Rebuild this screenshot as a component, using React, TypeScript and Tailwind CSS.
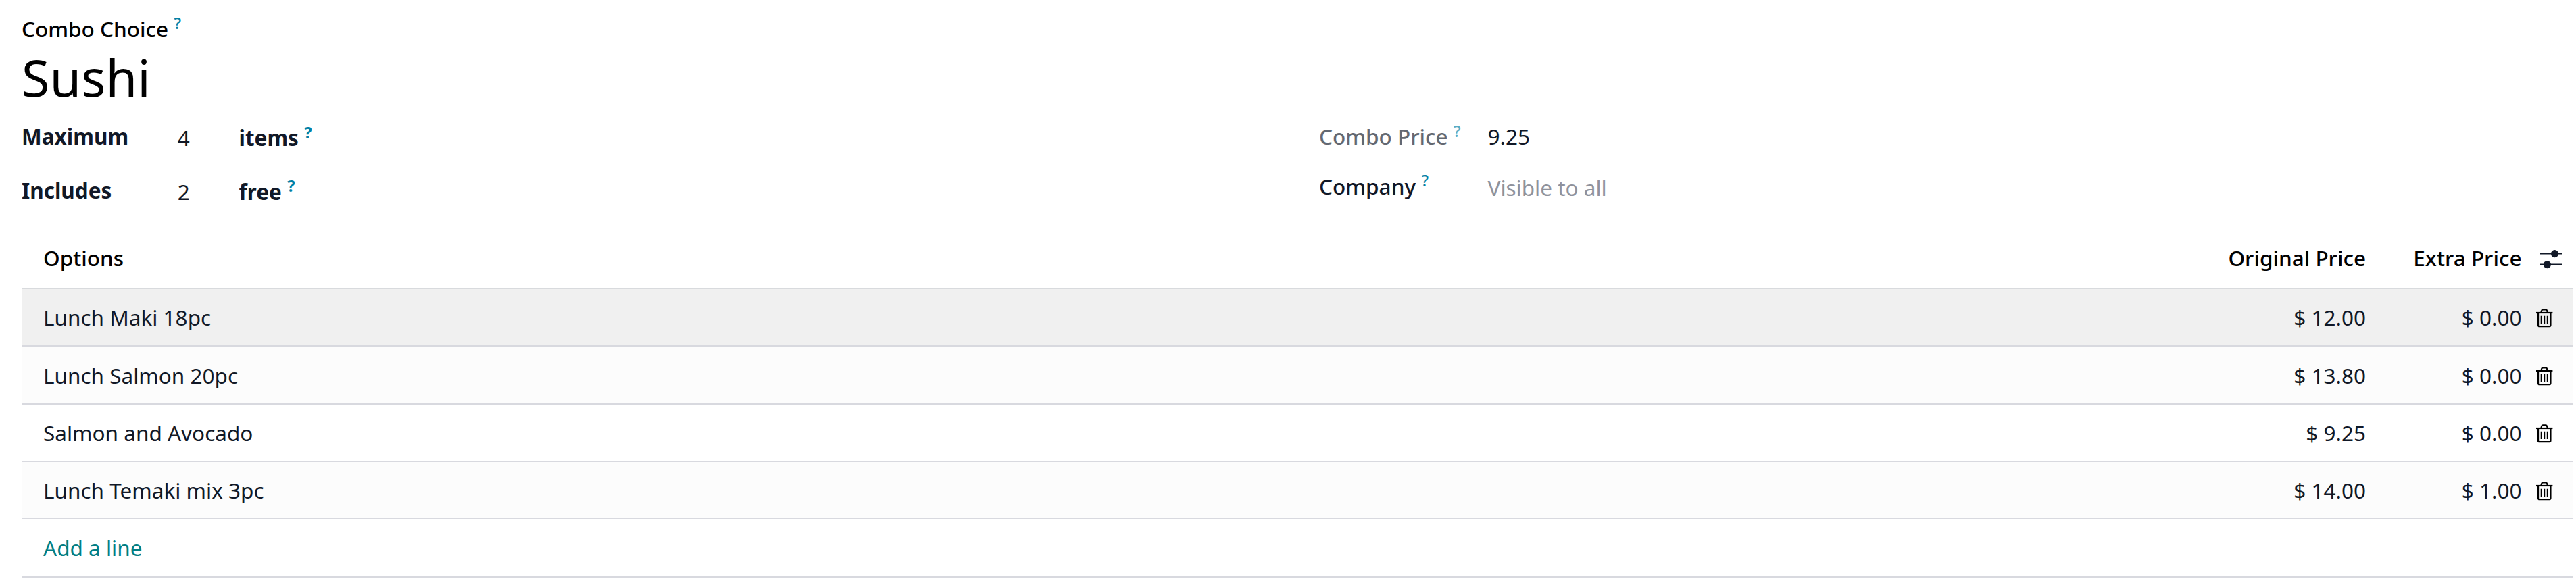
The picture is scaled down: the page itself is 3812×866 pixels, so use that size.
function Help({ className = "-mt-0.5" }: { className?: string }) {
  return <sup className={`top-0 ml-[8.4px] text-[23.6px] leading-[32px] text-[#0180a5] ${className}`}>?</sup>;
}

function TrashIcon() {
  return (
    <svg className="block h-7 w-6 overflow-visible" viewBox="0 0 24 28" fill="none" stroke="#000">
      <path d="M0 6H24.4" strokeWidth="2.2" />
      <path d="M7.2 6L8.2 2.7Q8.6 1.3 10 1.3H14.2Q15.6 1.3 16 2.7L17 6" strokeWidth="2.2" />
      <path d="M3 6V24.2Q3 26.2 5 26.2H19.4Q21.4 26.2 21.4 24.2V6" strokeWidth="2.3" />
      <path d="M7.7 10.7V22M12.2 10.7V22M16.8 10.7V22" strokeWidth="2" />
    </svg>
  );
}

function SlidersIcon() {
  return (
    <svg className="block h-7 w-8" viewBox="0 0 32 28" fill="#111827">
      <path d="M0 4.5h32v2h-32zM0 20.5h32v2h-32z" />
      <circle cx="21.5" cy="5.6" r="5.6" />
      <circle cx="10.4" cy="21.6" r="5.6" />
    </svg>
  );
}

const rows = [
  { name: "Lunch Maki 18pc", price: "$ 12.00", extra: "$ 0.00", row: "h-[85px] pt-5 bg-[#f0f0f0]" },
  { name: "Lunch Salmon 20pc", price: "$ 13.80", extra: "$ 0.00", row: "h-[86px] pt-[21px] bg-[#fcfcfc]" },
  { name: "Salmon and Avocado", price: "$ 9.25", extra: "$ 0.00", row: "h-[85px] pt-5 bg-white" },
  { name: "Lunch Temaki mix 3pc", price: "$ 14.00", extra: "$ 1.00", row: "h-[85px] pt-5 bg-[#fcfcfc]" },
];

export default function App() {
  return (
    <div className="h-[866px] w-[3812px] overflow-hidden bg-white pl-8 pr-1 pt-[21px] font-['Noto_Sans',sans-serif] text-[31.5px] leading-[43px] text-[#111827]">
      <div className="flex h-[41px] items-start font-medium text-black">
        Combo Choice
        <Help className="-mt-[3px]" />
      </div>
      <h1 className="text-[75.6px] leading-[103px] text-black">Sushi</h1>

      <div className="flex h-[197px] pt-[15px]">
        <div className="w-[1920px] font-bold">
          <div className="flex h-20 items-start">
            <span className="w-[230.75px]">Maximum</span>
            <span className="w-[90.75px] pt-0.5 font-normal">4</span>
            <span className="flex items-start pt-0.5">items<Help /></span>
          </div>
          <div className="flex h-20 items-start">
            <span className="w-[230.75px]">Includes</span>
            <span className="w-[90.75px] pt-0.5 font-normal">2</span>
            <span className="flex items-start pt-0.5">free<Help className="-mt-[3px]" /></span>
          </div>
        </div>
        <div>
          <div className="flex h-[74px] items-start">
            <span className="flex w-[249.5px] items-start font-medium opacity-65">Combo Price<Help /></span>
            <span>9.25</span>
          </div>
          <div className="flex items-start">
            <span className="flex w-[249.5px] items-start font-medium">Company<Help className="-mt-[3px]" /></span>
            <span className="pt-0.5 text-[#8f929c]">Visible to all</span>
          </div>
        </div>
      </div>

      <div className="flex h-[66px] items-start border-b border-[#d8dadd] pl-8 font-medium text-black">
        <span className="-mt-0.5 w-[3137px]">Options</span>
        <span className="-mt-0.5 w-[300px] text-right">Original Price</span>
        <span className="-mt-0.5 w-[230.5px] text-right">Extra Price</span>
        <span className="ml-[27.5px] pt-[8.25px]"><SlidersIcon /></span>
      </div>
      {rows.map((r) => (
        <div key={r.name} className={`flex items-start border-b-2 border-[#d8d9df] pl-8 ${r.row}`}>
          <span className="w-[3137px]">{r.name}</span>
          <span className="w-[300px] text-right">{r.price}</span>
          <span className="w-[230.5px] text-right">{r.extra}</span>
          <span className="ml-[21.5px] pt-[9px]"><TrashIcon /></span>
        </div>
      ))}
      <div className="flex h-[86px] items-start border-b-2 border-[#d8d9df] pl-8 pt-5 text-[#017e84]">Add a line</div>
    </div>
  );
}
